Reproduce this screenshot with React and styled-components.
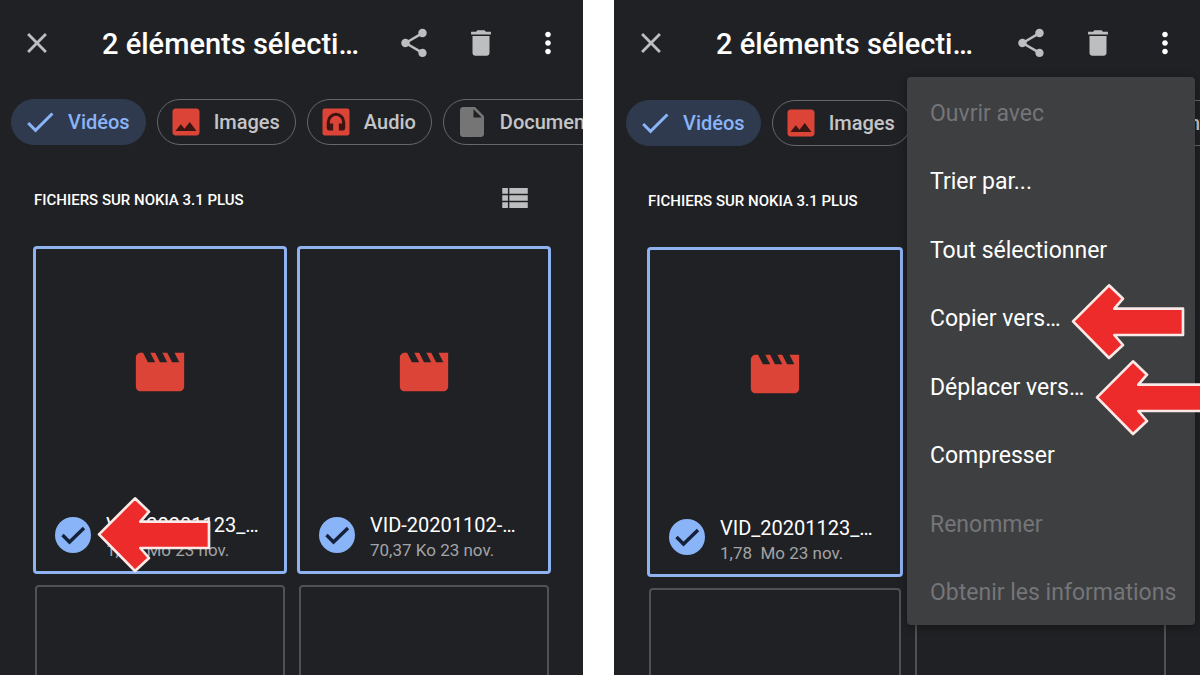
import React from 'react';
import styled, { createGlobalStyle } from 'styled-components';
import {
  MdCheck,
  MdClose,
  MdDelete,
  MdImage,
  MdInsertDriveFile,
  MdMoreVert,
  MdMovie,
  MdShare,
  MdViewList,
} from 'react-icons/md';

const GlobalStyle = createGlobalStyle`
  * {
    box-sizing: border-box;
  }

  body {
    margin: 0;
    background: #ffffff;
    font-family: Roboto, "Liberation Sans", sans-serif;
    overflow: hidden;
  }

  button {
    margin: 0;
    padding: 0;
    border: 0;
    background: none;
    color: inherit;
    font: inherit;
    cursor: pointer;
  }
`;

const Page = styled.main`
  display: grid;
  grid-template-columns: 583fr 586fr;
  gap: 31px;
  height: 100vh;
`;

const Phone = styled.section`
  position: relative;
  min-width: 0;
  overflow: hidden;
  background: #202124;
  color: #ffffff;
`;

const Toolbar = styled.header`
  display: flex;
  align-items: center;
  height: 86px;
  padding: 0 18px 0 20px;

  h1 {
    flex: 1;
    margin: 0 0 0 48px;
    padding-top: 2px;
    font-size: 29px;
    line-height: 36px;
    font-weight: 500;
    white-space: nowrap;
  }
`;

const ToolButton = styled.button`
  display: grid;
  place-items: center;
  width: 34px;
  height: 34px;
  color: ${(props) => (props.$bright ? '#ffffff' : '#bdbec0')};
`;

const Actions = styled.div`
  display: flex;
  gap: 33px;
`;

const Chips = styled.nav`
  display: flex;
  gap: 11px;
  margin: ${(props) => (props.$roomy ? '14px 0 0 12px' : '13px 0 0 11px')};
`;

const Chip = styled.button`
  display: flex;
  flex: none;
  align-items: center;
  gap: 10px;
  height: 46px;
  padding: 0 15px 0 10px;
  border: 1px solid ${(props) => (props.$active ? '#303a4e' : '#66676a')};
  border-radius: 23px;
  background: ${(props) => (props.$active ? '#303a4e' : 'transparent')};
  color: ${(props) => (props.$active ? '#8ab4f8' : '#c4c5c7')};
  font-size: 20px;
  font-weight: 500;
`;

const SectionHead = styled.div`
  display: flex;
  align-items: center;
  justify-content: space-between;
  margin: 36px 51px 0 34px;

  h2 {
    margin: 0;
    padding-top: 3px;
    font-size: 15px;
    line-height: 24px;
    font-weight: 500;
    text-transform: uppercase;
  }
`;

const Grid = styled.div`
  display: grid;
  grid-template-columns: 1fr 1fr;
  gap: 11px 10px;
  margin: 31px 32px 0 33px;
`;

const Card = styled.article`
  display: flex;
  flex-direction: column;
  min-width: 0;
  aspect-ratio: 254 / 328;
  border: 3px solid #8fb2f0;
  border-radius: 4px;
`;

const EmptyCard = styled.article`
  margin: 0 2px;
  aspect-ratio: 250 / 328;
  border: 2px solid #505154;
  border-radius: 4px;
`;

const Preview = styled.div`
  display: grid;
  flex: 1;
  place-items: center;
  padding-bottom: 3px;
  color: #db4437;
`;

const Info = styled.div`
  position: relative;
  display: flex;
  align-items: center;
  gap: 15px;
  height: 73px;
  padding-left: 19px;
  white-space: nowrap;
`;

const Tick = styled.label`
  display: grid;
  flex: none;
  width: 36px;
  height: 36px;

  input,
  svg {
    grid-area: 1 / 1;
    width: 36px;
    height: 36px;
  }

  input {
    margin: 0;
    appearance: none;
    border-radius: 50%;
    background: #8ab4f8;
  }

  svg {
    pointer-events: none;
  }
`;

const FileText = styled.div`
  padding-top: 5px;

  h3 {
    margin: 0;
    font-size: 20px;
    line-height: 26px;
    font-weight: 400;
  }

  p {
    margin: 0;
    color: #a3a4a7;
    font-size: 17px;
    line-height: 24px;
    white-space: pre;
  }
`;

const Menu = styled.ul`
  position: absolute;
  top: 77px;
  right: 5px;
  display: grid;
  grid-auto-rows: 1fr;
  width: 288px;
  min-height: 548px;
  margin: 0;
  padding: 0;
  border-radius: 4px;
  background: #3e3f41;
  box-shadow: 0 2px 8px rgba(0, 0, 0, 0.35);
  list-style: none;
`;

const MenuItem = styled.li`
  position: relative;
  display: flex;

  button {
    flex: 1;
    padding: 4px 0 0 23px;
    color: #ffffff;
    font-size: 23px;
    text-align: left;
    white-space: nowrap;
  }

  button:disabled {
    color: #747578;
  }
`;

const ArrowMark = styled.svg`
  position: absolute;
  left: ${(props) => props.$left}px;
  top: ${(props) => props.$top}px;
  width: 114px;
  height: 77px;
`;

function Arrow({ left, top }) {
  return (
    <ArrowMark $left={left} $top={top} viewBox="0 0 342 231" aria-hidden="true">
      <path
        d="M6 115 114 7 156 47 130 77H336V156H130L156 186 114 225Z"
        fill="#ee2b2b"
        stroke="#fbe9e7"
        strokeWidth="8"
        strokeLinejoin="round"
      />
    </ArrowMark>
  );
}

function AudioIcon() {
  return (
    <svg width="36" height="36" viewBox="0 0 24 24" aria-hidden="true">
      <rect x="3" y="3" width="18" height="18" rx="1.5" fill="#db4437" />
      <path
        d="M6.9 16V12a5.1 5.1 0 0 1 10.2 0v4"
        fill="none"
        stroke="#3a1512"
        strokeWidth="2"
      />
      <path
        d="M5.9 13h4.2v4.6H7.4a1.5 1.5 0 0 1-1.5-1.5zM13.9 13h4.2v3.1a1.5 1.5 0 0 1-1.5 1.5h-2.7z"
        fill="#3a1512"
      />
    </svg>
  );
}

function ImageIcon() {
  return (
    <svg width="36" height="36" viewBox="0 0 24 24" aria-hidden="true">
      <rect x="4" y="9" width="16" height="10" fill="#3a1512" />
      <MdImage size={24} color="#db4437" />
    </svg>
  );
}

function VideoCard({ name, details, arrow }) {
  return (
    <Card>
      <Preview>
        <MdMovie size={58} />
      </Preview>
      <Info>
        <Tick>
          <input type="checkbox" defaultChecked aria-label={name} />
          <svg viewBox="0 0 36 36" aria-hidden="true">
            <path d="M7.5 18 14.5 25 29 11" fill="none" stroke="#15213a" strokeWidth="3.4" />
          </svg>
        </Tick>
        <FileText>
          <h3>{name}</h3>
          <p>{details}</p>
        </FileText>
        {arrow && <Arrow left={61} top={-2} />}
      </Info>
    </Card>
  );
}

const menuItems = [
  { label: 'Ouvrir avec', disabled: true },
  { label: 'Trier par...' },
  { label: 'Tout sélectionner' },
  { label: 'Copier vers…', arrow: { left: 164, top: 0 } },
  { label: 'Déplacer vers…', arrow: { left: 188, top: 8 } },
  { label: 'Compresser' },
  { label: 'Renommer', disabled: true },
  { label: 'Obtenir les informations', disabled: true },
];

function FilesScreen({ roomy, arrow, children }) {
  return (
    <Phone>
      <Toolbar>
        <ToolButton aria-label="Fermer">
          <MdClose size={34} />
        </ToolButton>
        <h1>2 éléments sélecti…</h1>
        <Actions>
          <ToolButton aria-label="Partager">
            <MdShare size={34} />
          </ToolButton>
          <ToolButton aria-label="Supprimer">
            <MdDelete size={34} />
          </ToolButton>
          <ToolButton $bright aria-label="Plus d'options">
            <MdMoreVert size={34} />
          </ToolButton>
        </Actions>
      </Toolbar>
      <Chips $roomy={roomy}>
        <Chip $active>
          <MdCheck size={36} />
          Vidéos
        </Chip>
        <Chip>
          <ImageIcon />
          Images
        </Chip>
        <Chip>
          <AudioIcon />
          Audio
        </Chip>
        <Chip>
          <MdInsertDriveFile size={36} color="#757575" />
          Documents
        </Chip>
      </Chips>
      <SectionHead>
        <h2>Fichiers sur Nokia 3.1 Plus</h2>
        <ToolButton aria-label="Afficher en liste">
          <MdViewList size={34} />
        </ToolButton>
      </SectionHead>
      <Grid>
        <VideoCard name="VID_20201123_…" details="1,78  Mo 23 nov." arrow={arrow} />
        <VideoCard name="VID-20201102-…" details="70,37 Ko 23 nov." />
        <EmptyCard />
        <EmptyCard />
      </Grid>
      {children}
    </Phone>
  );
}

export default function App() {
  return (
    <>
      <GlobalStyle />
      <Page>
        <FilesScreen arrow />
        <FilesScreen roomy>
          <Menu>
            {menuItems.map((item) => (
              <MenuItem key={item.label}>
                <button disabled={item.disabled}>{item.label}</button>
                {item.arrow && <Arrow left={item.arrow.left} top={item.arrow.top} />}
              </MenuItem>
            ))}
          </Menu>
        </FilesScreen>
      </Page>
    </>
  );
}
